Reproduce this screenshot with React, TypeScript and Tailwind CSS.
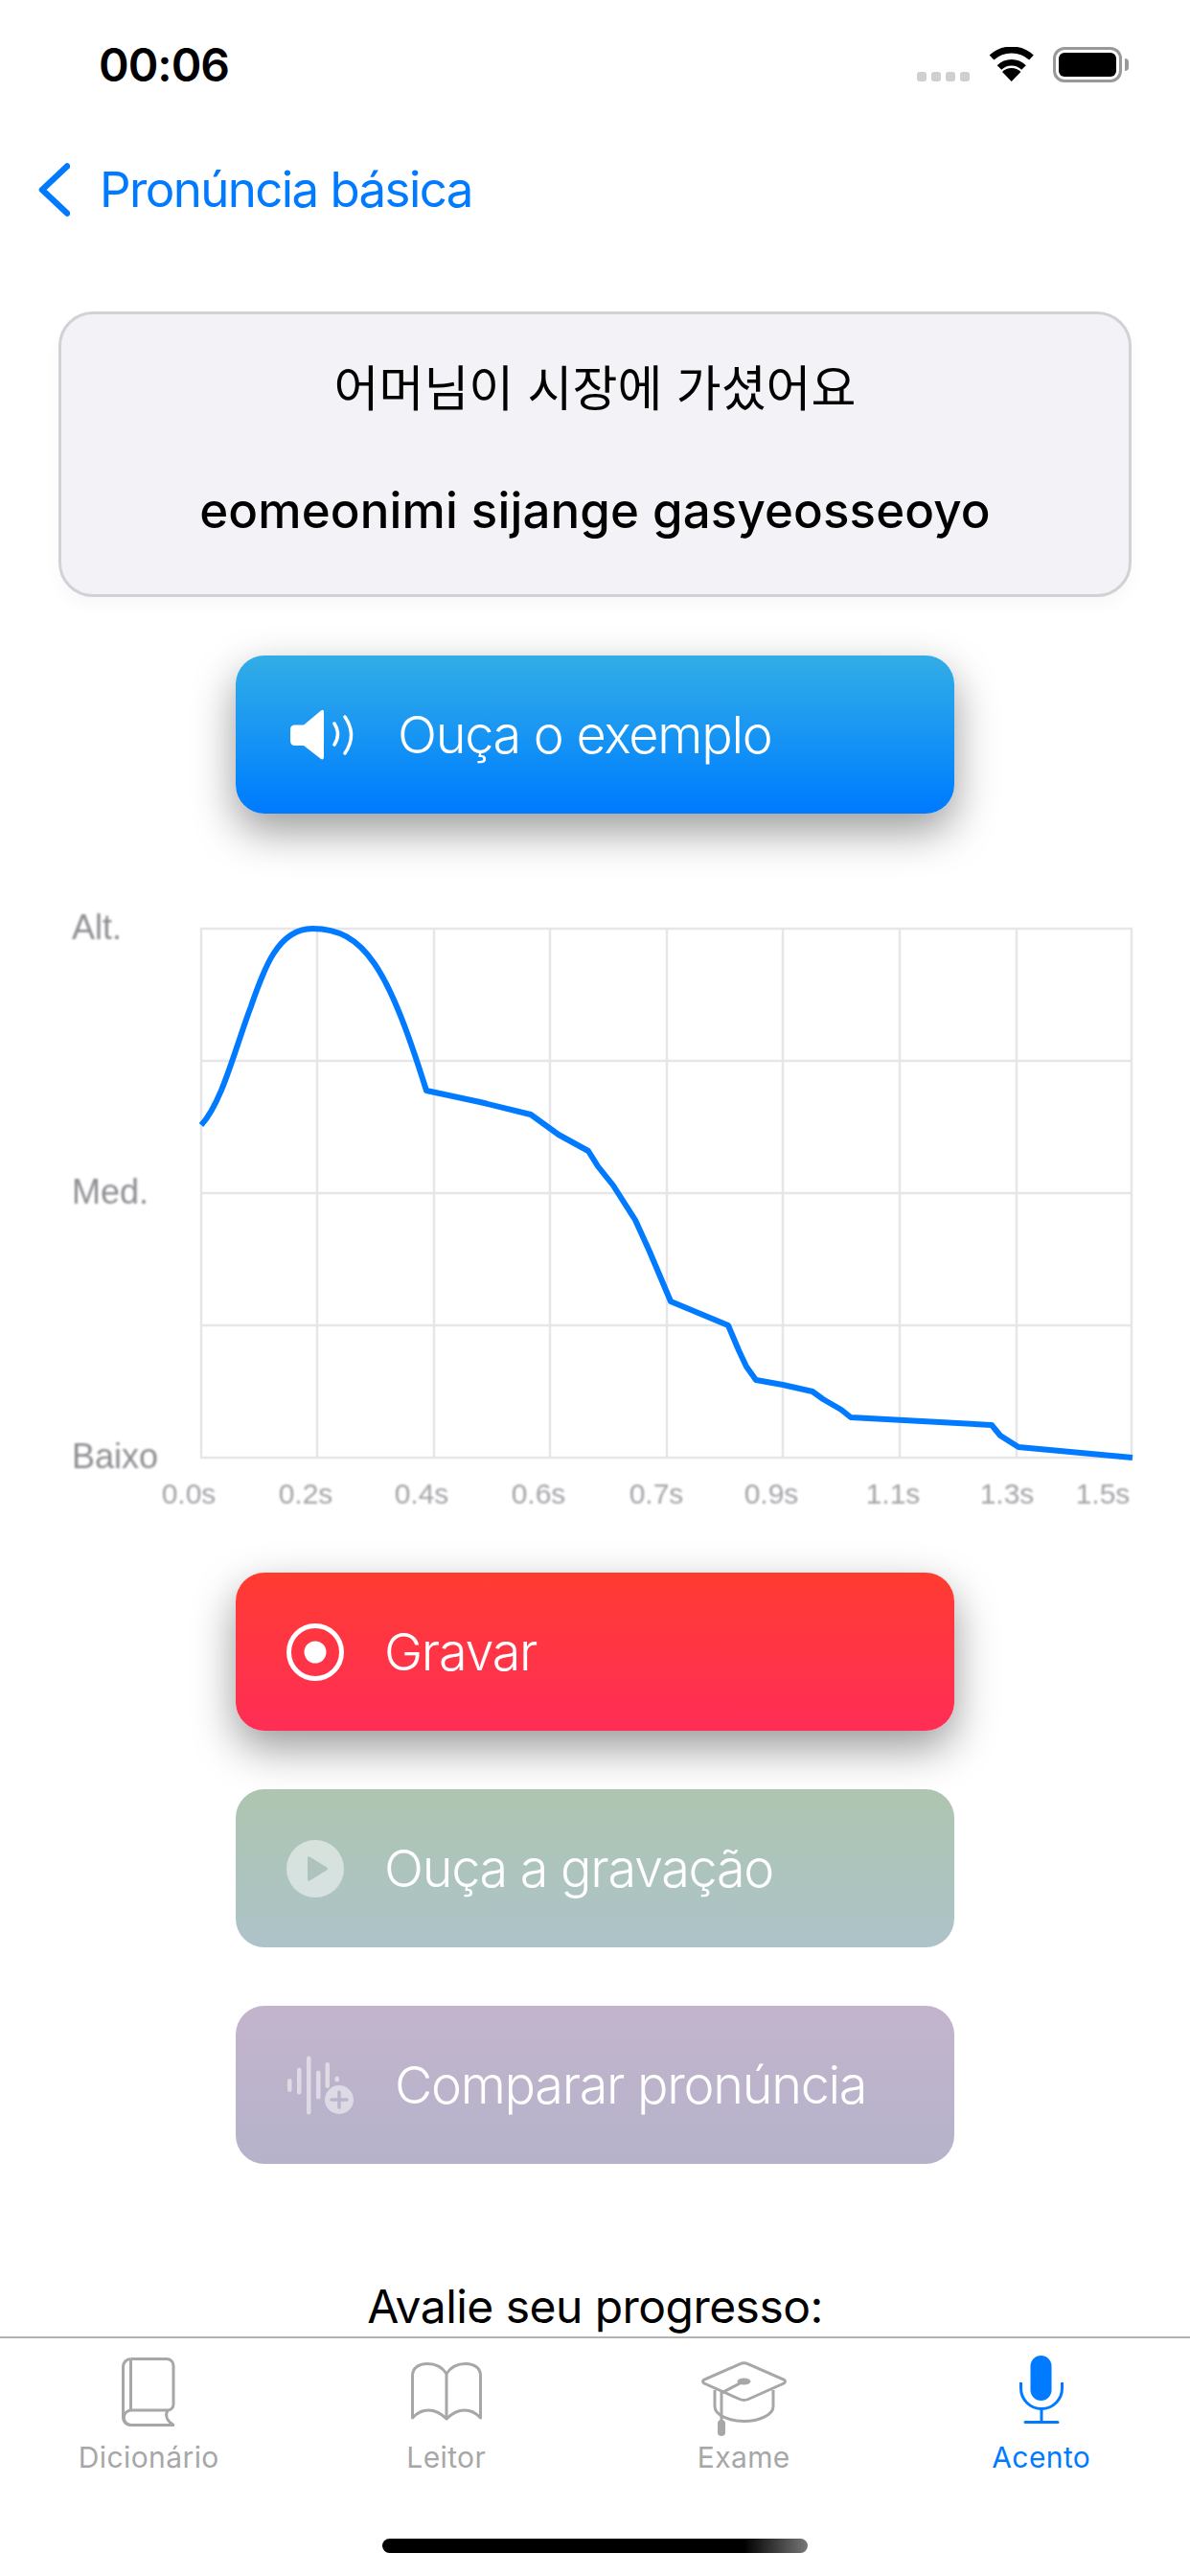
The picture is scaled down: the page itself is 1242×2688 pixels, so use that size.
const CURVE =
  'M210 1174C232 1150 245 1095 262 1050C275 1012 290 969 326 969C380 969 405 1010 445 1138L501 1150L554 1163L583 1184L614 1201L624 1217L640 1237L663 1273L678 1306L700 1358L760 1383L771 1409L779 1426L789 1440L817 1445L848 1452L859 1460L878 1471L888 1479L1035 1487L1044 1498L1063 1510L1182 1521';

const GRID_X = [210, 331, 453, 574, 696, 817, 939, 1061, 1181];
const GRID_Y = [969, 1107, 1245, 1383, 1521];
const X_LABELS = [
  ['0.0s', 197],
  ['0.2s', 319],
  ['0.4s', 440],
  ['0.6s', 562],
  ['0.7s', 685],
  ['0.9s', 805],
  ['1.1s', 932],
  ['1.3s', 1051],
  ['1.5s', 1151],
] as const;

const PitchChart = () => (
  <svg viewBox="0 930 1242 660" className="mt-[81px] block h-[660px] w-[1242px] font-['Liberation_Sans',sans-serif]">
    <g stroke="#e5e5ea" strokeWidth="2.500">
      {GRID_X.map((x) => (
        <line key={x} x1={x} x2={x} y1={968} y2={1522} />
      ))}
      {GRID_Y.map((y) => (
        <line key={y} x1={209} x2={1182} y1={y} y2={y} />
      ))}
    </g>
    <path d={CURVE} fill="none" stroke="#007aff" strokeWidth="6" strokeLinejoin="round" />
    <g fill="#8e8e93" fontSize="36" className="blur-[1px]">
      <text x="75" y="980">Alt.</text>
      <text x="75" y="1256">Med.</text>
      <text x="75" y="1532">Baixo</text>
    </g>
    <g fill="#a3a3a8" fontSize="30" textAnchor="middle" className="blur-[1px]">
      {X_LABELS.map(([label, x]) => (
        <text key={label} x={x} y="1569">{label}</text>
      ))}
    </g>
  </svg>
);

const SpeakerIcon = () => (
  <svg viewBox="0 0 66 54" className="h-[54px] w-[66px]" fill="none">
    <path
      d="M5 16.500H14L32 1.500Q35-.5 35 3V50Q35 53.500 32 52L14 38H5Q0 38 0 33V21Q0 16.500 5 16.500Z"
      fill="white"
    />
    <path d="M46 15Q53 26 46 37" stroke="white" strokeWidth="3.500" strokeLinecap="round" />
    <path d="M57 8Q70 27 57 46" stroke="white" strokeWidth="3.500" strokeLinecap="round" />
  </svg>
);

const RecordIcon = () => (
  <svg viewBox="0 0 60 60" className="h-[60px] w-[60px]" fill="none">
    <circle cx="30" cy="30" r="27.500" stroke="white" strokeWidth="5" />
    <circle cx="30" cy="30" r="11.500" fill="white" />
  </svg>
);

const PlayIcon = () => (
  <svg viewBox="0 0 60 60" className="h-[60px] w-[60px]">
    <circle cx="30" cy="30" r="30" fill="white" fillOpacity="0.5" />
    <path d="M22 19Q22 16 25 18L42 28.500Q44 30 42 31.500L25 42Q22 44 22 41Z" fill="#aec3bd" />
  </svg>
);

const WaveIcon = () => (
  <svg viewBox="0 0 70 62" className="h-[62px] w-[70px]" fill="white" fillOpacity="0.5">
    <rect x="0" y="24" width="4.500" height="14" rx="2.200" />
    <rect x="10" y="12.500" width="4.500" height="28" rx="2.200" />
    <rect x="20" y="0.500" width="4.500" height="61" rx="2.200" />
    <rect x="30" y="15.500" width="4.500" height="30" rx="2.200" />
    <rect x="39.500" y="7" width="4.500" height="27" rx="2.200" />
    <rect x="49.500" y="21.500" width="4.500" height="6" rx="2.200" />
    <circle cx="54" cy="46" r="15" />
    <path d="M54 38V54M46 46H62" stroke="#bbb5cc" strokeOpacity="1" strokeWidth="3.500" strokeLinecap="round" />
  </svg>
);

const ActionButton = ({
  label,
  icon,
  className,
  textClass,
}: {
  label: string;
  icon: React.ReactNode;
  className: string;
  textClass: string;
}) => (
  <div className={`mx-auto flex h-[165px] w-[750px] items-center rounded-[30px] ${className}`}>
    {icon}
    <span className={`text-[54px] leading-[64px] font-light tracking-[-1.3px] text-white ${textClass}`}>{label}</span>
  </div>
);

const BookIcon = () => (
  <svg viewBox="0 0 56 72" className="mt-[20px] h-[72px] w-[56px]" fill="none" stroke="#a7a7a7" strokeWidth="3">
    <path d="M9.500 1.500H47A7 7 0 0 1 54 8.500V49A6 6 0 0 1 48 55H10A7.500 7.500 0 0 0 10 70.500H55" />
    <path d="M9.500 1.500A8 8 0 0 0 1.500 9.500V63A7.500 7.500 0 0 0 9 70.500" />
    <path d="M9.500 2V55M48 55C45 60 47 66 54 70.500" />
  </svg>
);

const OpenBookIcon = () => (
  <svg viewBox="0 0 74 61" className="mt-[25px] h-[61px] w-[74px]" fill="none" stroke="#a7a7a7" strokeWidth="3" strokeLinejoin="round">
    <path d="M37 12C32 4 24 1.500 17 1.500C8 1.500 1.500 6 1.500 14V58C7 52 12 50 18 50C26 50 32 54 37 59V12Z" />
    <path d="M37 12C42 4 50 1.500 57 1.500C66 1.500 72.500 6 72.500 14V58C67 52 62 50 56 50C48 50 42 54 37 59" />
  </svg>
);

const CapIcon = () => (
  <svg viewBox="0 0 91 78" className="mt-[24px] h-[78px] w-[91px]" fill="none" stroke="#a7a7a7" strokeWidth="3">
    <path d="M41 3Q45.500 0.500 50 3L87 19Q90 21 87 23L50 39.500Q45.500 41.500 41 39.500L4 23Q1 21 4 19Z" />
    <path d="M15 30V47C15 56 30 62.500 45.500 62.500C61 62.500 76 56 76 47V30" />
    <path d="M45 21L22 33V62" />
    <ellipse cx="45.500" cy="21" rx="7" ry="3.500" fill="#a7a7a7" stroke="none" />
    <rect x="18" y="61" width="8" height="17" rx="4" fill="#a7a7a7" stroke="none" />
  </svg>
);

const MicIcon = () => (
  <svg viewBox="0 0 46 71" className="mt-[18px] h-[71px] w-[46px]" fill="none" stroke="#007aff" strokeWidth="3">
    <rect x="11.500" y="0" width="22" height="47" rx="11" fill="#007aff" stroke="none" />
    <path d="M1.500 28V34A21.500 21.500 0 0 0 44.500 34V28" />
    <path d="M23 56V69M6 69.500H40" strokeLinecap="round" />
  </svg>
);

const TABS = [
  { label: 'Dicionário', icon: <BookIcon /> },
  { label: 'Leitor', icon: <OpenBookIcon /> },
  { label: 'Exame', icon: <CapIcon /> },
  { label: 'Acento', icon: <MicIcon />, active: true },
];

const App = () => (
  <div className="flex h-[2688px] w-[1242px] flex-col overflow-hidden bg-white font-['Inter','Noto_Sans_CJK_KR',sans-serif]">
    <main className="h-[2438px] shrink-0 overflow-hidden">
      <div className="flex h-[132px] items-start justify-between pt-[46px] pr-[64px] pl-[103px]">
        <span className="text-[48px] leading-[44px] font-semibold tracking-[-1px] text-black">00:06</span>
        <div className="flex items-start">
          <div className="mt-[29px] flex gap-[5px]">
            <span className="h-[10px] w-[10px] rounded-[3px] bg-[#cfcfcf]" />
            <span className="h-[10px] w-[10px] rounded-[3px] bg-[#cfcfcf]" />
            <span className="h-[10px] w-[10px] rounded-[3px] bg-[#cfcfcf]" />
            <span className="h-[10px] w-[10px] rounded-[3px] bg-[#cfcfcf]" />
          </div>
          <svg viewBox="0 0 47 36" className="mt-[3px] ml-[20px] h-[36px] w-[47px]" fill="none" stroke="black">
            <path d="M3 11A31 31 0 0 1 44.500 11" strokeWidth="7" />
            <path d="M11 21.500A18 18 0 0 1 36.500 21.500" strokeWidth="6.500" />
            <path d="M23.700 36L14 26A14 14 0 0 1 33.400 26Z" fill="black" stroke="none" />
          </svg>
          <div className="mt-[3px] ml-[20px] flex items-center">
            <div className="h-[37px] w-[72px] rounded-[12px] border-[3px] border-[#999999] p-[3px]">
              <div className="h-full rounded-[6px] bg-black" />
            </div>
            <div className="ml-[3px] h-[13px] w-[4px] rounded-r-full bg-[#999999]" />
          </div>
        </div>
      </div>

      <div className="flex h-[132px] items-center pl-[40px]">
        <svg viewBox="0 0 33 56" className="h-[56px] w-[33px]" fill="none" stroke="#007aff" strokeWidth="6.500" strokeLinecap="round" strokeLinejoin="round">
          <path d="M30 3.500L4 28L30 52.500" />
        </svg>
        <span className="ml-[31px] text-[51px] leading-[60px] tracking-[-1.6px] text-[#007aff]">Pronúncia básica</span>
      </div>

      <div className="mx-auto mt-[61px] flex h-[298px] w-[1120px] flex-col items-center rounded-[36px] border-[3px] border-[#d1d1d6] bg-[#f2f2f7] pt-[43px] shadow-[0_9px_18px_rgba(0,0,0,0.03)]">
        <p className="text-[51px] leading-[70px] text-black">어머님이 시장에 가셨어요</p>
        <p className="mt-[57px] text-[51px] leading-[70px] font-medium tracking-[0.15px] text-black">eomeonimi sijange gasyeosseoyo</p>
      </div>

      <div className="mt-[61px]">
        <ActionButton
          label="Ouça o exemplo"
          className="bg-linear-to-b from-[#32ade6] to-[#007aff] pl-[57px] shadow-[0_18px_45px_rgba(0,0,0,0.4)]"
          textClass="ml-[46px]"
          icon={<SpeakerIcon />}
        />
      </div>

      <PitchChart />

      <div className="mt-[51px] flex flex-col gap-[61px]">
        <ActionButton
          label="Gravar"
          className="bg-linear-to-b from-[#ff3b30] to-[#ff2d55] pl-[53px] shadow-[0_18px_45px_rgba(0,0,0,0.4)]"
          textClass="ml-[42px]"
          icon={<RecordIcon />}
        />
        <ActionButton
          label="Ouça a gravação"
          className="bg-linear-to-b from-[#aec5b0] to-[#adc3c9] pl-[53px]"
          textClass="ml-[42px]"
          icon={<PlayIcon />}
        />
        <ActionButton
          label="Comparar pronúncia"
          className="bg-linear-to-b from-[#c3b4cd] to-[#b5b3ca] pl-[54px]"
          textClass="ml-[42px]"
          icon={<WaveIcon />}
        />
      </div>

      <p className="mt-[120px] text-center text-[48px] leading-[58px] tracking-[-0.55px] text-black">Avalie seu progresso:</p>
    </main>

    <nav className="h-[250px] border-t-[2px] border-[#b2b2b2]">
      <div className="grid h-[142px] grid-cols-4">
        {TABS.map((tab) => (
          <div key={tab.label} className="flex flex-col items-center">
            <div className="flex h-[106px] items-start">{tab.icon}</div>
            <span className={`text-[30px] leading-[36px] tracking-[0.4px] ${tab.active ? 'text-[#007aff]' : 'text-[#a7a7a7]'}`}>
              {tab.label}
            </span>
          </div>
        ))}
      </div>
      <div className="mx-auto mt-[67px] h-[15px] w-[444px] rounded-full bg-[linear-gradient(90deg,#000_85%,#777_100%)]" />
    </nav>
  </div>
);

export default App;
